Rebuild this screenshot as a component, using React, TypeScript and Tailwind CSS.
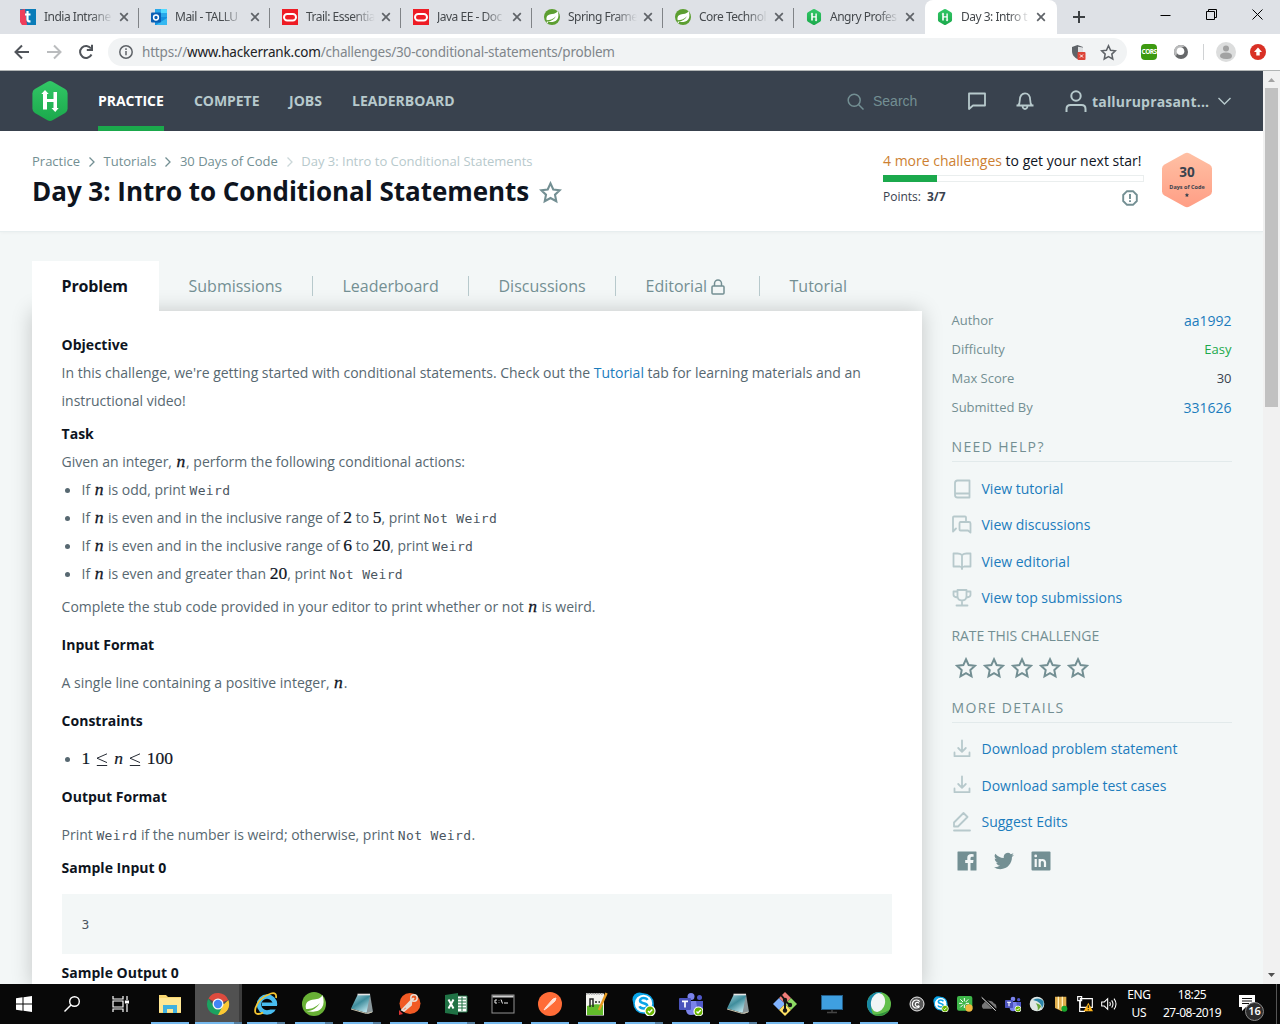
import React from "react";

type Kids = { children?: React.ReactNode };

/* ---------- brand marks ---------- */

const HackerMark = ({ className }: { className: string }) => (
  <svg viewBox="0 0 36 40" className={className}>
    <defs>
      <linearGradient id="hr" x1="0" y1="0" x2="0" y2="1">
        <stop offset="0" stopColor="#32c766" />
        <stop offset="1" stopColor="#1ba94c" />
      </linearGradient>
    </defs>
    <path d="M15.5 .8q2.5-1.4 5 0l12.600 7.300q2.500 1.500 2.500 4.400v15q0 2.900-2.500 4.400l-12.600 7.300q-2.500 1.400-5 0L2.900 31.900Q.4 30.400.4 27.500v-15q0-2.900 2.500-4.400z" fill="url(#hr)" />
    <path d="M11 28.500V13H9.300L13 9l3.700 4H15v5h6.500v-7H25v16h1.700L23.200 31l-3.700-4h2v-6H15v7.500z" fill="#fff" />
  </svg>
);

const Favicon = ({ kind }: { kind: string }) => {
  if (kind === "intra")
    return (
      <svg viewBox="0 0 16 16" className="size-4 shrink-0">
        <path d="M0 0h16v16H4z" fill="#0a7cb8" />
        <path d="M0 1l5-1 2 16H2L0 13z" fill="#ef3e5b" />
        <path d="M7.500 2v8.500q0 2 3 1.800M5 5.500h5.500" stroke="#fff" strokeWidth="2.200" fill="none" />
      </svg>
    );
  if (kind === "mail")
    return (
      <svg viewBox="0 0 16 16" className="size-4 shrink-0">
        <path d="M4 0h12v8H4z" fill="#28a8ea" />
        <path d="M10 0h6v4h-6z" fill="#50d9ff" />
        <path d="M4 8h12v8H4z" fill="#1490df" />
        <path d="M5 16l11-7v7z" fill="#35b8f1" />
        <rect y="3.500" width="10" height="10" rx="1" fill="#0a5fb4" />
        <circle cx="5" cy="8.500" r="2.400" fill="none" stroke="#fff" strokeWidth="1.500" />
      </svg>
    );
  if (kind === "oracle")
    return (
      <svg viewBox="0 0 16 16" className="size-4 shrink-0">
        <rect width="16" height="16" fill="#ee1c25" />
        <rect x="2" y="5" width="12" height="6.500" rx="3.200" fill="none" stroke="#fff" strokeWidth="2" />
      </svg>
    );
  if (kind === "spring") return <SpringLeaf className="size-4 shrink-0" />;
  return <HackerMark className="size-4 shrink-0" />;
};

const SpringLeaf = ({ className }: { className: string }) => (
  <svg viewBox="0 0 24 24" className={className}>
    <circle cx="12" cy="12" r="12" fill="#5c9e31" />
    <path d="M20.500 3q2.500 8-.5 12.500C16 21 9 19.500 4.500 19.500 11 18.500 15 16 18 11 13 16 9 17 4 17 2.500 10 7 8 12 7.500 16.500 7 19 6 20.500 3z" fill="#fff" />
    <circle cx="5" cy="19.800" r="1.200" fill="#fff" />
  </svg>
);

/* ---------- browser chrome ---------- */

const CloseX = () => (
  <svg viewBox="0 0 10 10" className="size-2.5 shrink-0" stroke="#5f6368" strokeWidth="1.700">
    <path d="M1.200 1.200l7.600 7.600M8.800 1.200L1.200 8.800" />
  </svg>
);

const tabs = [
  ["intra", "India Intrane"],
  ["mail", "Mail - TALLU"],
  ["oracle", "Trail: Essentia"],
  ["oracle", "Java EE - Doc"],
  ["spring", "Spring Frame"],
  ["spring", "Core Technol"],
  ["hr", "Angry Profes"],
  ["hr", "Day 3: Intro t"],
];

const TabStrip = () => (
  <div className="flex h-[34px] bg-[#dee1e6] pl-2 font-['Noto_Sans']">
    {tabs.map(([kind, title], i) => {
      const active = i === tabs.length - 1;
      return (
        <div
          key={i}
          className={
            active
              ? "relative flex h-[34px] w-[132px] items-center rounded-t-lg bg-white pl-3"
              : "relative flex h-[34px] w-[131px] items-center pl-3"
          }
        >
          <Favicon kind={kind} />
          <div className="ml-2 w-[69px] whitespace-nowrap text-[12px] tracking-[-0.5px] text-[#45494d] [mask-image:linear-gradient(to_right,#000_68%,transparent)]">
            {title}
          </div>
          <div className="ml-1.5 flex">
            <CloseX />
          </div>
          {i < 6 && <div className="absolute right-0 top-2 h-5 w-px bg-[#808387]" />}
        </div>
      );
    })}
    <svg viewBox="0 0 12 12" className="ml-[16px] mt-[11px] size-3" stroke="#3c4043" strokeWidth="2">
      <path d="M6 0v12M0 6h12" />
    </svg>
    <div className="ml-auto flex items-center gap-[35px] pb-[6px] pr-[17px]">
      <svg viewBox="0 0 11 11" className="size-[11px]" stroke="#000"><path d="M.5 6.500h10" /></svg>
      <svg viewBox="0 0 11 11" className="size-[11px]" stroke="#000" fill="none"><path d="M.5 2.500h8v8h-8zM2.500 2.500v-2h8v8h-2" /></svg>
      <svg viewBox="0 0 11 11" className="size-[11px]" stroke="#000"><path d="M.5.5l10 10M10.500.5l-10 10" /></svg>
    </div>
  </div>
);

const star = "M12 2.500l2.900 6.300 6.800.8-5 4.700 1.300 6.800L12 17.700l-6 3.400 1.300-6.800-5-4.700 6.800-.8z";

const Toolbar = () => (
  <div className="flex h-[37px] items-center border-b border-[#b2b5b5] bg-white pl-[14px]">
    <svg viewBox="0 0 16 16" className="size-4" fill="none" stroke="#50545a" strokeWidth="2"><path d="M15 8H2M8 1.500L1.500 8 8 14.500" /></svg>
    <svg viewBox="0 0 16 16" className="ml-4 size-4" fill="none" stroke="#babcbe" strokeWidth="2"><path d="M1 8h13M8 1.500L14.500 8 8 14.500" /></svg>
    <svg viewBox="0 0 16 16" className="ml-4 size-4" fill="none" stroke="#50545a" strokeWidth="2"><path d="M13.500 10.500A6 6 0 1 1 13 4.500M14 .8v5.200H8.800" /></svg>
    <div className="ml-[14px] flex h-7 w-[1019px] items-center rounded-full bg-[#f1f3f4] pl-[11px] pr-[10px]">
      <svg viewBox="0 0 14 14" className="size-[14px]" fill="none" stroke="#5f6368" strokeWidth="1.500"><circle cx="7" cy="7" r="6.200" /><path d="M7 6v4.300M7 3.300v1.600" /></svg>
      <span className="ml-[9px] whitespace-nowrap font-['Noto_Sans'] text-[13.500px] tracking-[-0.190px] text-[#80868b]">
        https://<span className="text-[#202124]">www.hackerrank.com</span>/challenges/30-conditional-statements/problem
      </span>
      <svg viewBox="0 0 15 16" className="ml-auto h-4 w-[15px]">
        <path d="M6.500 1L1 3v4c0 4 2.500 6.500 5.500 8L12 12V3z" fill="#5f6368" />
        <path d="M7 2.700V8h5V3.500z" fill="#dfe1e3" />
        <rect x="6.500" y="8" width="8" height="8" rx="1" fill="#dd4438" />
        <path d="M9 10.500l3 3M12 10.500l-3 3" stroke="#fff" />
      </svg>
      <svg viewBox="0 0 24 24" className="ml-[14px] size-[17px]" fill="none" stroke="#5f6368" strokeWidth="2.200"><path d={star} /></svg>
    </div>
    <div className="ml-[14px] flex h-4 w-4 items-center justify-center rounded-sm bg-[#3d9a10] font-['Open_Sans'] text-[6.500px] font-bold tracking-[-0.600px] text-white">CORS</div>
    <svg viewBox="0 0 14 14" className="ml-[17px] size-[14px]">
      <circle cx="7" cy="7" r="7" fill="#66686a" />
      <path d="M0 7a7 7 0 0 1 11-5.700Q4 3 2 11.500A7 7 0 0 1 0 7z" fill="#b9babb" />
      <circle cx="6.500" cy="6.300" r="3.800" fill="#fff" />
    </svg>
    <div className="ml-[15px] h-4 w-px bg-[#d0d2d4]" />
    <svg viewBox="0 0 20 20" className="ml-[12px] size-5"><circle cx="10" cy="10" r="10" fill="#dcdddd" /><circle cx="10" cy="6.500" r="3" fill="#a2a2a2" /><path d="M4 14q0-3.500 6-3.500t6 3.500-6 3-6-3z" fill="#a2a2a2" /></svg>
    <svg viewBox="0 0 16 16" className="ml-[14px] size-4"><circle cx="8" cy="8" r="8" fill="#d93025" /><path d="M8 3.500l4 4.500H9.700v3.500H6.300V8H4z" fill="#fff" /></svg>
  </div>
);

/* ---------- site header ---------- */

const SiteHeader = () => (
  <header className="flex h-[60px] shrink-0 items-center bg-[#39424e] pl-8 font-['Open_Sans'] text-[#b7c9cc]">
    <HackerMark className="h-10 w-9" />
    <nav className="ml-[30px] flex h-full gap-[30px] text-[14px] font-bold">
      <div className="flex h-full w-[66px] items-center whitespace-nowrap border-b-[5px] border-[#1ba94c] pt-[4px] tracking-[-0.04px] text-white">PRACTICE</div>
      <div className="flex h-full w-[65px] items-center whitespace-nowrap pb-[2px] tracking-[-0.06px]">COMPETE</div>
      <div className="flex h-full w-[33px] items-center whitespace-nowrap pb-[2px]">JOBS</div>
      <div className="flex h-full items-center whitespace-nowrap pb-[2px]">LEADERBOARD</div>
    </nav>
    <div className="ml-auto flex h-full items-center pr-[32px]">
      <svg viewBox="0 0 17 17" className="size-[17px]" fill="none" stroke="#738f93" strokeWidth="1.500"><circle cx="7.200" cy="7.200" r="6" /><path d="M11.500 11.500l5 5" /></svg>
      <span className="ml-[9px] w-[86px] font-['Liberation_Sans'] text-[14px] text-[#738f93]">Search</span>
      <svg viewBox="0 0 18 18" className="ml-[9px] size-[18px]" fill="none" stroke="#b7c9cc" strokeWidth="1.800" strokeLinejoin="round"><path d="M1 1.500h16v12H5L1 17z" /></svg>
      <svg viewBox="0 0 18 18" className="ml-[30px] size-[18px]" fill="none" stroke="#b7c9cc" strokeWidth="1.800"><path d="M.5 13.500h17M2 13.500q1.800-1.500 1.800-5.500C3.800 4 6 1.300 9 1.300S14.200 4 14.200 8q0 4 1.800 5.500M6.500 14q.3 3 2.500 3t2.500-3" /></svg>
      <svg viewBox="0 0 22 23" className="ml-[31px] h-[23px] w-[22px]" fill="none" stroke="#b7c9cc" strokeWidth="2"><circle cx="11" cy="6" r="4.700" /><path d="M1.500 22v-3q0-4 4-4h11q4 0 4 4v3" /></svg>
      <span className="ml-[5px] w-[117px] whitespace-nowrap text-[14px] font-bold tracking-[0.18px]">talluruprasant...</span>
      <svg viewBox="0 0 13 8" className="ml-[9px] h-2 w-[13px]" fill="none" stroke="#b7c9cc" strokeWidth="1.400"><path d="M.5 1l6 6 6-6" /></svg>
    </div>
  </header>
);

const Chev = ({ light }: { light?: boolean }) => (
  <svg viewBox="0 0 6 10" className="ml-[9px] mr-[8.500px] h-[10px] w-[6px]" fill="none" stroke={light ? "#cbd7d9" : "#738f93"} strokeWidth="1.300"><path d="M.5.500L5 5 .5 9.500" /></svg>
);

const TitleBar = () => (
  <section className="flex h-[101px] shrink-0 border-b border-[#e7eeef] bg-white pl-8 font-['Open_Sans'] shadow-[0_1px_3px_rgba(0,0,0,0.03)]">
    <div className="pt-[21px]">
      <div className="flex h-5 items-center whitespace-nowrap text-[13px] text-[#738f93]">
        <span>Practice</span><Chev /><span>Tutorials</span><Chev /><span>30 Days of Code</span><Chev light />
        <span className="text-[#b7c9cc]">Day 3: Intro to Conditional Statements</span>
      </div>
      <div className="-mt-px flex h-10 items-center">
        <h1 className="w-[497px] whitespace-nowrap text-[26px] font-bold tracking-[-0.030px] text-[#0e141e]">Day 3: Intro to Conditional Statements</h1>
        <svg viewBox="0 0 24 24" className="ml-[10px] mt-[2px] size-[23px]" fill="none" stroke="#738f93" strokeWidth="2.200"><path d={star} /></svg>
      </div>
    </div>
    <div className="ml-auto w-[261px] pt-5">
      <div className="h-5 whitespace-nowrap text-[14px] leading-5 text-[#0e141e]"><span className="text-[#cd7f32]">4 more challenges</span> to get your next star!</div>
      <div className="mt-1 h-[7px] border border-[#eaeeee]"><div className="-ml-px -mt-px h-[7px] w-[54px] bg-[#1ba94c]" /></div>
      <div className="flex h-[30px] items-center text-[12px] text-[#39424e]">
        <span>Points:</span><span className="ml-[6px] font-bold">3/7</span>
        <svg viewBox="0 0 16 16" className="ml-auto mr-[6px] mt-[2px] size-4" fill="none" stroke="#738f93" strokeWidth="1.900"><path d="M5 1.200h6L14.800 5v6L11 14.800H5L1.200 11V5z" /><path d="M8 4v5M8 10.300v1.700" /></svg>
      </div>
    </div>
    <div className="relative ml-[17px] mr-[50px] mt-[21px] h-14 w-[52px]">
      <svg viewBox="0 0 52 56" className="h-14 w-[52px]">
        <defs><linearGradient id="bd" x1="0" y1="0" x2="0" y2="1"><stop offset="0" stopColor="#ffc0a4" /><stop offset="1" stopColor="#ff9e85" /></linearGradient></defs>
        <path d="M23.500 1.500q2.500-1.300 5 0l20 11q2.500 1.500 2.500 4v23q0 2.500-2.500 4l-20 11q-2.500 1.300-5 0l-20-11Q1 42 1 39.500v-23q0-2.500 2.500-4z" fill="url(#bd)" />
        <path transform="translate(23.300 40.300) scale(.22)" d={star} fill="#39424e" />
      </svg>
      <div className="absolute inset-x-0 top-[12px] text-center text-[13.500px] font-bold leading-4 text-[#39424e]">30</div>
      <div className="absolute inset-x-0 top-[31px] whitespace-nowrap text-center text-[5.500px] font-bold leading-[8px] text-[#39424e]">Days of Code</div>
    </div>
  </section>
);

/* ---------- problem ---------- */

const N = () => <i className="mx-[0.250px] inline-block w-[10px] text-center font-['Liberation_Serif'] text-[17.500px] leading-none text-[#0e141e] [-webkit-text-stroke:0.300px_#0e141e]">n</i>;
const Num = ({ children }: Kids) => <span className="font-['Liberation_Serif'] text-[17.500px] leading-none text-[#0e141e] [-webkit-text-stroke:0.2px_#0e141e]">{children}</span>;
const Code = ({ children }: Kids) => <code className="font-['DejaVu_Sans_Mono'] text-[13px] leading-none tracking-[0.350px] text-[#4b565f]">{children}</code>;
const H = ({ children, className }: Kids & { className?: string }) => <div className={"font-bold tracking-normal text-[#0e141e] " + (className ?? "")}>{children}</div>;
const Li = ({ children }: Kids) => (
  <li className="flex h-7 items-center">
    <span className="ml-[3px] mr-[12px] size-[5px] rounded-full bg-[#576871]" />
    <div className="whitespace-nowrap leading-7">{children}</div>
  </li>
);

const Leq = () => (
  <svg viewBox="0 0 12 14" className="mx-[5.500px] inline-block h-[14px] w-3 align-[-3px]" fill="none" stroke="#0e141e" strokeWidth="0.900">
    <path d="M11 .8L1 5.200l10 4.400" /><path d="M.8 12.500h10.400" />
  </svg>
);

const navTabs = ["Submissions", "Leaderboard", "Discussions", "Editorial", "Tutorial"];
const navWidths = ["w-[154px]", "w-[156px]", "w-[147px]", "w-[144px]", "w-[110px]"];

const Problem = () => (
  <div className="flex w-[890px] flex-col">
    <div className="flex h-[50px] shrink-0 items-center text-[16px] text-[#738f93]">
      <div className="relative z-10 flex h-[50px] w-[127px] items-center whitespace-nowrap bg-white pl-[29.500px] font-bold tracking-[-0.150px] text-[#0e141e]">Problem</div>
      {navTabs.map((t, i) => (
        <div key={t} className={"relative flex h-5 items-center whitespace-nowrap pl-[29.500px] " + navWidths[i]}>
          {t}
          {t === "Editorial" && (
            <svg viewBox="0 0 14 16" className="ml-[4px] mt-[2px] h-4 w-[14px]" fill="none" stroke="#738f93" strokeWidth="1.500"><rect x="1" y="7" width="12" height="8" rx="1" /><path d="M3.500 7V4.500a3.500 3.500 0 0 1 7 0V7" /></svg>
          )}
          {i < 4 && <span className="absolute right-0 top-0 h-5 w-px bg-[#b7c9cc]" />}
        </div>
      ))}
    </div>
    <div className="h-[760px] bg-white pl-[29.600px] pr-[30px] pt-5 text-[14px] leading-7 tracking-[-0.012px] text-[#576871] shadow-[0_0_20px_rgba(0,0,0,0.2)]">
      <H>Objective</H>
      <p>In this challenge, we're getting started with conditional statements. Check out the <span className="text-[#1b7cbd]">Tutorial</span> tab for learning materials and an<br />instructional video!</p>
      <H className="mt-[5px]">Task</H>
      <p className="h-7">Given an integer, <N />, perform the following conditional actions:</p>
      <ul>
        <Li>If <N /> is odd, print <Code>Weird</Code></Li>
        <Li>If <N /> is even and in the inclusive range of <Num>2</Num> to <Num>5</Num>, print <Code>Not Weird</Code></Li>
        <Li>If <N /> is even and in the inclusive range of <Num>6</Num> to <Num>20</Num>, print <Code>Weird</Code></Li>
        <Li>If <N /> is even and greater than <Num>20</Num>, print <Code>Not Weird</Code></Li>
      </ul>
      <p className="mt-[5px] h-7">Complete the stub code provided in your editor to print whether or not <N /> is weird.</p>
      <H className="mt-2.5">Input Format</H>
      <p className="mt-2.5 h-7">A single line containing a positive integer, <N />.</p>
      <H className="mt-2.5">Constraints</H>
      <ul className="mt-2.5"><Li><Num>1<Leq /><i className="inline-block w-[10.500px] text-center">n</i><Leq />100</Num></Li></ul>
      <H className="mt-2.5">Output Format</H>
      <p className="mt-2.5 h-7">Print <Code>Weird</Code> if the number is weird; otherwise, print <Code>Not Weird</Code>.</p>
      <H className="mt-[5px]">Sample Input 0</H>
      <div className="mt-3 flex h-[60px] items-center bg-[#f3f7f7] pl-5"><Code>3</Code></div>
      <H className="mt-[5px]">Sample Output 0</H>
    </div>
  </div>
);

/* ---------- sidebar ---------- */

const LinkRow = ({ children, label }: Kids & { label: string }) => (
  <div className="flex h-[36.400px] items-center text-[14px] text-[#1b7cbd]">
    <svg viewBox="0 0 20 20" className="mr-[10px] size-5" fill="none" stroke="#b7c9cc" strokeWidth="1.800" strokeLinejoin="round" strokeLinecap="round">{children}</svg>
    <span className="whitespace-nowrap">{label}</span>
  </div>
);

const Heading = ({ children }: Kids) => <div className="h-[24px] border-b border-[#e2eaeb] text-[14px] leading-[18px] tracking-[1.350px] text-[#738f93]">{children}</div>;

const downloadPath = "M10 1.500v11M6.200 9l3.800 3.800L13.800 9M2.500 13.500v3.700h15v-3.700";

const Sidebar = () => (
  <aside className="ml-[29.500px] w-[280px] pt-[45px]">
    {[
      ["Author", "aa1992", "text-[14px] text-[#1b7cbd]"],
      ["Difficulty", "Easy", "text-[13px] text-[#1ba94c]"],
      ["Max Score", "30", "text-[13px] text-[#39424e]"],
      ["Submitted By", "331626", "text-[14px] text-[#1b7cbd]"],
    ].map(([k, v, c]) => (
      <div key={k} className="flex h-[29px] items-center justify-between text-[13px] text-[#738f93]"><span>{k}</span><span className={c}>{v}</span></div>
    ))}
    <div className="mt-[16px]"><Heading>NEED HELP?</Heading></div>
    <div className="mt-[8.400px]">
      <LinkRow label="View tutorial"><path d="M5.500 1.500h12v17h-12q-2.500 0-2.500-2.500V4q0-2.500 2.500-2.500zM3.500 14.500h14" /></LinkRow>
      <LinkRow label="View discussions"><path d="M4 13.500l-3 3v-14q0-1 1-1h11q1 0 1 1v3M8.500 7H17q1.500 0 1.500 1.500v9l-2.500-2H8.500Q7.500 15.500 7.500 14.500v-6q0-1.500 1-1.500z" /></LinkRow>
      <LinkRow label="View editorial"><path d="M10 4Q8 2.500 5.500 2.500h-4v13H8q2 .500 2 2.500 0-2 2-2.500h6.500v-13h-4Q12 2.500 10 4zM10 4v13" /></LinkRow>
      <LinkRow label="View top submissions"><path d="M5.500 2h9v6q0 4.500-4.500 4.500T5.500 8zM5.500 3.500h-4V7q0 2 4 2.500M14.500 3.500h4V7q0 2-4 2.500M10 12.500V17M4.500 17.500h11" /></LinkRow>
    </div>
    <div className="mt-[9.500px] text-[14px] leading-[22px] tracking-[-0.060px] text-[#738f93]">RATE THIS CHALLENGE</div>
    <div className="mt-[9.100px] flex gap-[6px] pl-[3px]">
      {[0, 1, 2, 3, 4].map((i) => (
        <svg key={i} viewBox="0 0 24 24" className="size-[22px]" fill="none" stroke="#738f93" strokeWidth="2.200"><path d={star} /></svg>
      ))}
    </div>
    <div className="mt-[20px]"><Heading>MORE DETAILS</Heading></div>
    <div className="mt-[8px]">
      <LinkRow label="Download problem statement"><path d={downloadPath} /></LinkRow>
      <LinkRow label="Download sample test cases"><path d={downloadPath} /></LinkRow>
      <LinkRow label="Suggest Edits"><path d="M2 14.500v-4L11.500 1l4 4L6 14.500zM2 18.500h16" /></LinkRow>
    </div>
    <div className="mt-[11px] flex gap-[17px] pl-[5.500px]">
      <svg viewBox="0 0 20 20" className="size-5"><path d="M1 .5h18q.5 0 .5.5v18q0 .5-.5.500h-5.500v-7.500h2.600l.4-3h-3V7.200q0-1.400 1.500-1.400h1.600V3.200q-6.300-1-6.300 3.600V9H8.200v3h2.600v7.500H1q-.5 0-.5-.5V1Q.5.5 1 .5z" fill="#738f93" /></svg>
      <svg viewBox="0 0 24 24" className="size-5"><path d="M23.950 4.570a10 10 0 0 1-2.820.77 4.960 4.960 0 0 0 2.160-2.720c-.95.55-2 .95-3.130 1.180a4.920 4.920 0 0 0-8.380 4.480C7.690 8.100 4.070 6.130 1.640 3.160a4.820 4.820 0 0 0 1.520 6.570 4.900 4.900 0 0 1-2.230-.61v.06c0 2.380 1.700 4.370 3.950 4.820a5 5 0 0 1-2.210.09 4.940 4.940 0 0 0 4.600 3.420A9.870 9.870 0 0 1 0 19.540a13.990 13.990 0 0 0 7.550 2.210c9.050 0 14-7.500 14-13.980l-.01-.64a9.940 9.940 0 0 0 2.410-2.560z" fill="#738f93" /></svg>
      <svg viewBox="0 0 20 20" className="size-5"><rect x=".5" y=".5" width="19" height="19" rx="1" fill="#738f93" /><path d="M4.700 8v8M8.700 8v8M8.700 11.500q0-2.500 2.500-2.500t2.800 2.500V16" stroke="#f3f7f7" strokeWidth="2.200" fill="none" /><circle cx="4.700" cy="4.900" r="1.400" fill="#f3f7f7" /></svg>
    </div>
  </aside>
);

/* ---------- taskbar ---------- */

const Ok = ({ x = 18, y = 19, r = 5 }: { x?: number; y?: number; r?: number }) => (
  <g><circle cx={x} cy={y} r={r} fill="#6bb700" stroke="#fff" strokeWidth="1.200" /><path d={`M${x - 2} ${y}l1.500 1.500 2.800-3`} stroke="#fff" strokeWidth="1.400" fill="none" /></g>
);

const Skype = () => (
  <g>
    <circle cx="7.500" cy="7.500" r="7" fill="#0aa5e8" /><circle cx="15" cy="15" r="7" fill="#0aa5e8" /><circle cx="11.500" cy="11.500" r="9.500" fill="#fff" stroke="#0aa5e8" strokeWidth="1.600" />
    <path d="M15.500 8q-1-2-4-2T8 8.500q0 2 3.500 2.700t3.800 2.600q0 2.700-3.500 2.700T7.500 14.300" stroke="#0aa5e8" strokeWidth="2.500" fill="none" />
    <Ok />
  </g>
);

const Teams = () => (
  <g>
    <circle cx="12" cy="4.500" r="3.500" fill="#7b83eb" /><circle cx="20.500" cy="5.500" r="2.500" fill="#5059c9" />
    <path d="M7 9h12v8q-1 6-7 6-4.500 0-5-5z" fill="#7b83eb" /><path d="M17 9h7v8q-1 4-5 4z" fill="#5059c9" />
    <rect y="6" width="12" height="12" rx="1" fill="#4b53bc" /><path d="M3 9.300h6M6 9.300V15.500" stroke="#fff" strokeWidth="1.700" />
    <Ok x={19.500} y={19.500} r={4.500} />
  </g>
);

const Notepad = () => (
  <g>
    <defs><linearGradient id="np" x1="0" y1="0" x2=".7" y2="1"><stop offset="0" stopColor="#a9d3dc" /><stop offset=".5" stopColor="#3f8d9c" /><stop offset="1" stopColor="#bfe6ee" /></linearGradient></defs>
    <path d="M20 2l3 18-5 2-3-3z" fill="#8a979b" /><path d="M7.500 3H20l-3.500 18L1 16.500z" fill="url(#np)" /><path d="M7.500 2.500h12.500" stroke="#e6e6e6" strokeWidth="1.600" /><path d="M1 17L16.500 21.500l5.500-1.500" stroke="#c9c4ae" fill="none" />
  </g>
);

const apps: { art: React.ReactNode; wide?: boolean; split?: boolean }[] = [
  { wide: true, art: <g><path d="M1 3h7l2 2h13v16H1z" fill="#f9d771" /><path d="M1 6h22v14H1z" fill="#ffe794" /><path d="M5 13h14v8h-4v-4H9v4H5z" fill="#3fb0e0" /></g> },
  { wide: true, art: <g><path d="M12 12L2.500 6.500A11 11 0 0 1 22.200 8z" fill="#dd4b3e" /><path d="M12 12h11a11 11 0 0 1-11.500 11z" fill="#fcc934" /><path d="M22.400 8A11 11 0 0 1 12 23l4-9z" fill="#fcc934" /><path d="M2.300 6.700A11 11 0 0 0 12 23l4.500-8.500L8 14z" fill="#1ba260" /><circle cx="12" cy="12" r="5.500" fill="#f6f6f6" /><circle cx="12" cy="12" r="4.200" fill="#4285f4" /></g> },
  { wide: true, split: true, art: <g><circle cx="13" cy="12.500" r="8" fill="none" stroke="#49bdf0" strokeWidth="4.500" /><path d="M12 13.500h12v4H15z" fill="#080808" /><path d="M8 10.500h15v3.500H8z" fill="#49bdf0" /><path d="M22 6q1-6-5-4.500Q5 5.500 1.500 16q-1.500 6 2.500 6 3 0 5-1.500" stroke="#f4c531" strokeWidth="1.800" fill="none" /></g> },
  { wide: true, split: true, art: <g><circle cx="12" cy="12" r="12" fill="#68b035" /><path d="M20.500 3q2.500 8-.5 12.500C16 21 9 19.500 4.500 19.500 11 18.500 15 16 18 11 13 16 9 17 4 17 2.500 10 7 8 12 7.500 16.500 7 19 6 20.500 3z" fill="#fff" /></g> },
  { split: true, art: <Notepad /> },
  { art: <g><circle cx="13" cy="11.500" r="10.500" fill="#f15a24" /><circle cx="17" cy="6" r="3.200" fill="none" stroke="#e8ddd5" strokeWidth="1.500" /><path d="M17 6L9 16M14.500 8L5 18l2 1L14 13z" stroke="#e8ddd5" strokeWidth="1.800" fill="none" /><path d="M2 18l4 4-4 1z" fill="#d33" /></g> },
  { split: true, art: <g><path d="M11 4h12v16H11z" fill="#fff" stroke="#207245" /><path d="M14 7h8M14 10h8M14 13h8M14 16h8M18 5v14" stroke="#207245" /><path d="M1 3l13-2v22L1 21z" fill="#207245" /><path d="M4.500 7.500l5 9M9.500 7.500l-5 9" stroke="#fff" strokeWidth="2" /></g> },
  { art: <g><rect x="1" y="3" width="22" height="18" fill="#030303" stroke="#929292" /><path d="M1.500 4.500h21" stroke="#d0d0d0" strokeWidth="2" /><path d="M6 8H4v3h2M8 8.500v.5M8 10.500v.5M10 7.500l1.500 4M13 11h4" stroke="#eee" fill="none" /></g> },
  { art: <g><circle cx="12" cy="12" r="12" fill="#ff6c37" /><path d="M18 6l-3 1-7 8-2 3 3-2 8-7z" fill="#ffe3d8" stroke="#ffe3d8" /></g> },
  { art: <g><rect x="1" y="1.500" width="18" height="22" fill="#f4f4f0" /><path d="M2 14q8-3 16-1v10H2z" fill="#62bb2b" /><path d="M1 2h17" stroke="#bbb" strokeWidth="2" strokeDasharray="1.500 1" /><path d="M5 15V7h3v8M10 10h2M13.500 10h1.500" stroke="#222" strokeWidth="1.500" fill="none" /><path d="M21.500 1L14 18" stroke="#e79a22" strokeWidth="2.500" /></g> },
  { split: true, art: <Skype /> },
  { art: <Teams /> },
  { split: true, art: <Notepad /> },
  { art: <g><path d="M12 0l6 6-6 6-6-6z" fill="#f07c78" /><path d="M6 6l6 6-6 6-6-6z" fill="#80b3ff" /><path d="M18 6l6 6-6 6-6-6z" fill="#8ddb64" /><path d="M12 12l6 6-6 6-6-6z" fill="#ffe163" /><path d="M8 3l4 5v11M12 9l5 4" stroke="#151515" strokeWidth="2" fill="none" /><circle cx="12" cy="8" r="2.200" fill="#151515" /><circle cx="17" cy="13" r="2.200" fill="#151515" /><circle cx="12" cy="18.500" r="2.200" fill="#151515" /></g> },
  { art: <g><rect x="1.500" y="3.500" width="21" height="14" fill="#3f9fe0" stroke="#235d88" /><path d="M12 18v2M7 20.500h10" stroke="#444" strokeWidth="1.500" /></g> },
  { art: <g><circle cx="12" cy="12" r="12" fill="#61bf4b" /><path d="M15 .4A12 12 0 0 0 6 22.400Q0 12 15 .4z" fill="#1787a5" /><path d="M6 22.400A12 12 0 0 0 22 18q-8 5-16 4.400z" fill="#2f8f3c" /><ellipse cx="11" cy="10.500" rx="7" ry="9.500" transform="rotate(12 11 10.500)" fill="#f1f5f5" /></g> },
];

const tray: React.ReactNode[] = [
  <g><circle cx="12" cy="12" r="10.500" fill="#595959" stroke="#eee" strokeWidth="1.500" /><path d="M16 8.500a6 6 0 1 0 0 7M15 11a3 3 0 1 0 0 3" stroke="#fff" strokeWidth="1.800" fill="none" /></g>,
  <Skype />,
  <g><rect width="23" height="22" rx="3" fill="#3eb649" /><path d="M11 3v5M11 13v5M3 11h5M13 11h5M5 5l4 4M13 13l4 4M17 5l-4 4M5 17l4-4" stroke="#fff" strokeWidth="1.500" /><circle cx="18" cy="18" r="5.500" fill="#f0b83f" /></g>,
  <g><path d="M3 19q-4-5 1-8 3-6 8-4 6 0 7 4 5 1 4 8z" fill="#777" /><path d="M2 2l21 20" stroke="#090909" strokeWidth="4" /><path d="M1 2l21 20" stroke="#eee" strokeWidth="1.500" /></g>,
  <Teams />,
  <g><circle cx="12" cy="12" r="11" fill="#dfe7e5" /><path d="M6 6q10-5 16 2 1 6-3 11 1-10-13-13z" fill="#2c86aa" /><path d="M10 11q7 1 8 5l-5 6q1-7-3-11z" fill="#68a93e" /></g>,
  <g><path d="M3 1h17v18l-7 4-10-5z" fill="#dfad4b" /><path d="M8 1v18M14 1v21" stroke="#fff0bb" strokeWidth="2" /><circle cx="17" cy="19" r="4.500" fill="#17a52b" /></g>,
  <g><path d="M5 4h18v13H5zM1 1h6v6H1zM4 7v16h8" stroke="#fff" strokeWidth="1.700" fill="none" /><path d="M17 10l7 13H10z" fill="#ffb51b" /><path d="M17 14v4M17 20v1.500" stroke="#221" strokeWidth="1.800" /></g>,
  <g fill="none" stroke="#fff" strokeWidth="1.600"><path d="M1 9h4l5-5v16l-5-5H1zM13 9q2 3 0 6M16 6.500q4 5.500 0 11M19.500 4q6 8 0 16" /></g>,
];

const Taskbar = () => (
  <footer className="flex h-10 shrink-0 items-center bg-[#080808] font-['Noto_Sans']">
    <div className="flex w-[146px] items-center">
      <svg viewBox="0 0 16 16" className="ml-4 size-4" fill="#fff"><path d="M0 2.200L6.500 1.300v6.200H0zM7.500 1.200L16 0v7.500H7.500zM0 8.500h6.500v6.200L0 13.800zM7.500 8.500H16V16l-8.500-1.200z" /></svg>
      <svg viewBox="0 0 16 16" className="ml-8 size-4" fill="none" stroke="#fff" strokeWidth="1.400"><circle cx="10.500" cy="5.500" r="4.800" /><path d="M7 9L.5 15.500" /></svg>
      <svg viewBox="0 0 17 16" className="ml-8 h-4 w-[17px]" fill="none" stroke="#fff" strokeWidth="1.200"><path d="M1 0v3h10V0M1 5h10v6H1zM1 16v-3h10v3M15 0v4M15 8v8" /><path d="M13.500 5h3v2h-3z" fill="#fff" /></svg>
    </div>
    {apps.map((a, i) => (
      <div key={i} className={"relative flex h-10 items-center justify-center " + (a.wide ? "w-12 " : "w-[47px] ")}>
        {i === 1 && <div className="absolute inset-y-0 left-px right-0 border-r-[3px] border-[#3c3c3c] bg-[#515151]" />}
        <svg viewBox="0 0 24 24" className={i === 1 ? "relative size-6" : "size-6"}>{a.art}</svg>
        <div className={"absolute bottom-0 flex h-[2px] bg-[#76b9ed] " + (i === 1 ? "left-px right-0" : a.wide ? "inset-x-[5px]" : "left-[5px] right-[4px]")}>
          {(a.split || i === 1) && <span className="ml-auto w-2 bg-[#557e9f]" />}
        </div>
      </div>
    ))}
    <div className="ml-[7px] flex gap-2">
      {tray.map((art, i) => <svg key={i} viewBox="0 0 24 24" className="size-4">{art}</svg>)}
    </div>
    <div className="ml-[8px] w-[28px] text-center text-[12px] leading-[18px] tracking-[-0.3px] text-white">ENG<br />US</div>
    <div className="ml-[8px] w-[62px] whitespace-nowrap text-center text-[12px] leading-[18px] tracking-[-0.450px] text-white">18:25<br />27-08-2019</div>
    <div className="relative ml-[16px] h-6 w-7">
      <svg viewBox="0 0 17 16" className="mt-[3px] h-4 w-[17px]"><path d="M0 0h16v12H7l-4 4v-4H0z" fill="#fff" /><path d="M3 3.500h10M3 6h10M3 8.500h7" stroke="#111" /></svg>
      <div className="absolute left-[6px] top-[10px] flex size-[19px] items-center justify-center rounded-full border border-[#8a8a8a] bg-[#2d2d2d] text-[11px] font-semibold text-white">16</div>
    </div>
    <div className="ml-auto mr-[3px] h-10 w-px bg-[#555]" />
  </footer>
);

export default function App() {
  return (
    <div className="flex h-[1024px] w-[1280px] flex-col overflow-hidden">
      <TabStrip />
      <Toolbar />
      <div className="flex h-[913px] shrink-0">
        <div className="flex w-[1263px] flex-col overflow-hidden bg-[#f3f7f7]">
          <SiteHeader />
          <TitleBar />
          <main className="flex min-h-0 flex-1 pl-8 pt-[29px] font-['Open_Sans']">
            <Problem />
            <Sidebar />
          </main>
        </div>
        <div className="flex w-[17px] flex-col items-center bg-[#f1f1f1]">
          <svg viewBox="0 0 7 4" className="my-[7px] h-[4px] w-[7px] shrink-0" fill="#a3a3a3"><path d="M0 4L3.500 0 7 4z" /></svg>
          <div className="-mt-px h-[319px] w-[13px] shrink-0 bg-[#c1c1c1]" />
          <svg viewBox="0 0 7 4" className="mb-[7px] mt-auto h-[4px] w-[7px]" fill="#505050"><path d="M0 0l3.500 4L7 0z" /></svg>
        </div>
      </div>
      <Taskbar />
    </div>
  );
}
